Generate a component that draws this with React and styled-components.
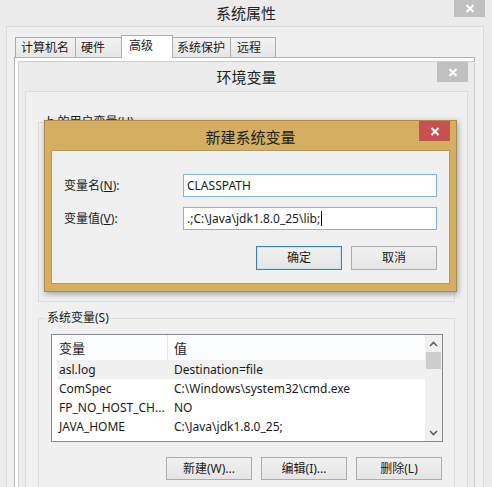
import React from "react";
import styled, { createGlobalStyle, css } from "styled-components";

const GlobalStyle = createGlobalStyle`
  html, body {
    margin: 0;
    padding: 0;
    background: #ebebeb;
  }
  body {
    font-family: "Noto Sans", "Noto Sans CJK SC", sans-serif;
    font-size: 12px;
    color: #1a1a1a;
  }
  * {
    box-sizing: border-box;
  }
`;

const Page = styled.div`
  position: relative;
  width: 492px;
  height: 487px;
  overflow: hidden;
  background: #ebebeb;
  display: flex;
  flex-direction: column;
`;

/* title bars: title centred over the whole width, close button at the right */
const TitleBar = styled.div`
  display: grid;
  grid-template-columns: 1fr auto 1fr;
  align-items: start;
  height: ${(p) => p.$height}px;
  flex: none;
`;

const TitleText = styled.div`
  grid-column: 2;
  align-self: center;
  font-size: 15px;
  line-height: 20px;
  color: #222;
  padding-top: ${(p) => p.$offset || 0}px;
`;

const CloseButton = styled.div`
  grid-column: 3;
  justify-self: end;
  width: 31px;
  height: ${(p) => p.$h || 20}px;
  background: ${(p) => (p.$active ? "#c75050" : "#c0c0c0")};
  display: flex;
  align-items: center;
  justify-content: center;
  margin-right: ${(p) => p.$mr || 0}px;
`;

const Client = styled.div`
  flex: 1;
  margin: 0 8px 0 6px;
  border: 1px solid #dadada;
  border-bottom: none;
  background: #f0f0f0;
  padding: 8px 0 0 7px;
  display: flex;
  flex-direction: column;
`;

const TabRow = styled.div`
  display: flex;
  align-items: flex-end;
  padding-left: 2px;
  height: 22px;
`;

const Tab = styled.div`
  width: ${(p) => p.$w}px;
  height: 20px;
  border: 1px solid #acacac;
  border-bottom: none;
  margin-left: -1px;
  background: linear-gradient(#f2f2f2, #e6e6e6);
  padding-left: ${(p) => p.$pl || 5}px;
  line-height: 20px;
  white-space: nowrap;
  ${(p) =>
    p.$selected &&
    css`
      position: relative;
      z-index: 1;
      height: 23px;
      margin-bottom: -1px;
      background: #fff;
      line-height: 20px;
    `}
`;

const TabPanel = styled.div`
  flex: 1;
  width: 461px;
  border: 1px solid #b4b4b4;
  border-bottom: none;
  background: #fff;
  padding: 3px 0 0 3px;
`;

const EnvWindow = styled.div`
  width: 457px;
  height: 100%;
  border: 1px solid #cfcfcf;
  border-bottom: none;
  background: #ececec;
  padding: 0 6px;
  display: flex;
  flex-direction: column;
`;

const EnvContent = styled.div`
  flex: 1;
  border: 1px solid #dcdcdc;
  border-bottom: none;
  background: #f0f0f0;
  padding: 0 12px;
`;

const Group = styled.fieldset`
  margin: ${(p) => p.$mt}px 0 0 0;
  padding: 8px 11px 0 12px;
  border: 1px solid #dcdcdc;
  height: ${(p) => p.$h}px;
  min-width: 0;
`;

const Legend = styled.legend`
  padding: 0 2px;
  margin-left: -6px;
  line-height: 16px;
  color: #1a1a1a;
`;

const List = styled.div`
  width: 392px;
  height: 108px;
  border: 1px solid #828790;
  background: #fff;
  display: flex;
`;

const ListBody = styled.div`
  flex: 1;
  padding-left: 5px;
  overflow: hidden;
`;

const ListRow = styled.div`
  display: grid;
  grid-template-columns: 111px 1fr;
  height: ${(p) => (p.$header ? 25 : 19)}px;
  align-items: center;
  background: ${(p) => (p.$header ? "#fbfcfd" : p.$selected ? "#f0f0f0" : "transparent")};
  white-space: nowrap;
`;

const Cell = styled.div`
  padding-left: ${(p) => (p.$second ? 6 : 2)}px;
  height: 100%;
  display: flex;
  align-items: center;
  ${(p) => p.$divider && "border-right: 1px solid #e5e5e5;"}
  ${(p) => p.$header && "font-size: 13px;"}
`;

const Scrollbar = styled.div`
  width: 17px;
  background: #f0f0f0;
  display: flex;
  flex-direction: column;
  align-items: center;
`;

const ArrowBox = styled.div`
  height: 17px;
  width: 100%;
  display: flex;
  align-items: center;
  justify-content: center;
`;

const Thumb = styled.div`
  width: 15px;
  height: 17px;
  background: #cdcdcd;
`;

const Spacer = styled.div`
  flex: 1;
`;

const ButtonRow = styled.div`
  display: flex;
  justify-content: flex-end;
  gap: ${(p) => p.$gap}px;
  margin-top: ${(p) => p.$mt}px;
  padding-right: ${(p) => p.$pr || 0}px;
`;

const Button = styled.div`
  width: 86px;
  height: ${(p) => p.$h || 23}px;
  border: 1px solid ${(p) => (p.$default ? "#3c7fb1" : "#acacac")};
  background: linear-gradient(#f0f0f0, #e5e5e5);
  ${(p) => p.$default && "box-shadow: inset 0 0 0 1px #c4e5f6;"}
  display: flex;
  align-items: center;
  justify-content: center;
  line-height: 16px;
`;

/* the modal dialog floats above the environment window */
const Dialog = styled.div`
  position: absolute;
  left: 44px;
  top: 120px;
  width: 413px;
  height: 172px;
  border: 1px solid #a88c50;
  background: #d5ae62;
  padding: 0 6px 7px;
  display: flex;
  flex-direction: column;
  box-shadow: 1px 2px 6px rgba(0, 0, 0, 0.35);
`;

const DialogContent = styled.div`
  flex: 1;
  border: 1px solid #b9984f;
  background: #f0f0f0;
  padding: 23px 12px 12px;
  display: flex;
  flex-direction: column;
`;

const FieldRow = styled.div`
  display: flex;
  align-items: center;
  margin-top: ${(p) => p.$mt || 0}px;
`;

const FieldLabel = styled.div`
  width: 119px;
  line-height: 16px;
`;

const Input = styled.div`
  width: 254px;
  height: 23px;
  border: 1px solid #7eb4ea;
  background: #fff;
  padding-left: 3px;
  display: flex;
  align-items: center;
  line-height: 16px;
  white-space: nowrap;
`;

const Caret = styled.span`
  display: inline-block;
  width: 1px;
  height: 15px;
  background: #000;
  margin-left: 1px;
`;

const CloseIcon = () => (
  <svg width="10" height="9" viewBox="0 0 10 9">
    <path d="M1.5 1 L8.5 8 M8.5 1 L1.5 8" stroke="#fff" strokeWidth="2" fill="none" />
  </svg>
);

const Chevron = ({ down }) => (
  <svg width="9" height="6" viewBox="0 0 9 6">
    <path
      d={down ? "M1 1 L4.5 4.5 L8 1" : "M1 5 L4.5 1.5 L8 5"}
      stroke="#606060"
      strokeWidth="1.6"
      fill="none"
    />
  </svg>
);

const tabs = [
  { label: "计算机名", w: 61, pl: 5 },
  { label: "硬件", w: 47, pl: 5 },
  { label: "高级", w: 52, pl: 7, selected: true },
  { label: "系统保护", w: 59, pl: 4 },
  { label: "远程", w: 46, pl: 6 },
];

const rows = [
  ["asl.log", "Destination=file"],
  ["ComSpec", "C:\\Windows\\system32\\cmd.exe"],
  ["FP_NO_HOST_CH...", "NO"],
  ["JAVA_HOME", "C:\\Java\\jdk1.8.0_25;"],
];

export default function App() {
  return (
    <>
      <GlobalStyle />
      <Page>
        <TitleBar $height={26}>
          <TitleText>系统属性</TitleText>
          <CloseButton $h={17} $mr={7}>
            <CloseIcon />
          </CloseButton>
        </TitleBar>

        <Client>
          <TabRow>
            {tabs.map((t) => (
              <Tab key={t.label} $w={t.w} $pl={t.pl} $selected={t.selected}>
                {t.label}
              </Tab>
            ))}
          </TabRow>
          <TabPanel>
            <EnvWindow>
              <TitleBar $height={29}>
                <TitleText $offset={1}>环境变量</TitleText>
                <CloseButton>
                  <CloseIcon />
                </CloseButton>
              </TitleBar>
              <EnvContent>
                <Group $mt={22} $h={188}>
                  <Legend>h 的用户变量(U)</Legend>
                </Group>
                <Group $mt={8} $h={200}>
                  <Legend>系统变量(S)</Legend>
                  <List>
                    <ListBody>
                      <ListRow $header>
                        <Cell $divider $header>变量</Cell>
                        <Cell $second $header>值</Cell>
                      </ListRow>
                      {rows.map(([name, value], i) => (
                        <ListRow key={name} $selected={i === 0}>
                          <Cell>{name}</Cell>
                          <Cell $second>{value}</Cell>
                        </ListRow>
                      ))}
                    </ListBody>
                    <Scrollbar>
                      <ArrowBox>
                        <Chevron />
                      </ArrowBox>
                      <Thumb />
                      <Spacer />
                      <ArrowBox>
                        <Chevron down />
                      </ArrowBox>
                    </Scrollbar>
                  </List>
                  <ButtonRow $gap={9} $mt={15} $pr={1}>
                    <Button>新建(W)...</Button>
                    <Button>编辑(I)...</Button>
                    <Button>删除(L)</Button>
                  </ButtonRow>
                </Group>
              </EnvContent>
            </EnvWindow>
          </TabPanel>
        </Client>

        <Dialog>
          <TitleBar $height={29}>
            <TitleText $offset={3}>新建系统变量</TitleText>
            <CloseButton $active>
              <CloseIcon />
            </CloseButton>
          </TitleBar>
          <DialogContent>
            <FieldRow>
              <FieldLabel>
                变量名(<u>N</u>):
              </FieldLabel>
              <Input>CLASSPATH</Input>
            </FieldRow>
            <FieldRow $mt={10}>
              <FieldLabel>
                变量值(<u>V</u>):
              </FieldLabel>
              <Input>
                .;C:\Java\jdk1.8.0_25\lib;
                <Caret />
              </Input>
            </FieldRow>
            <ButtonRow $gap={9} $mt={16}>
              <Button $default $h={24}>确定</Button>
              <Button $h={24}>取消</Button>
            </ButtonRow>
          </DialogContent>
        </Dialog>
      </Page>
    </>
  );
}
